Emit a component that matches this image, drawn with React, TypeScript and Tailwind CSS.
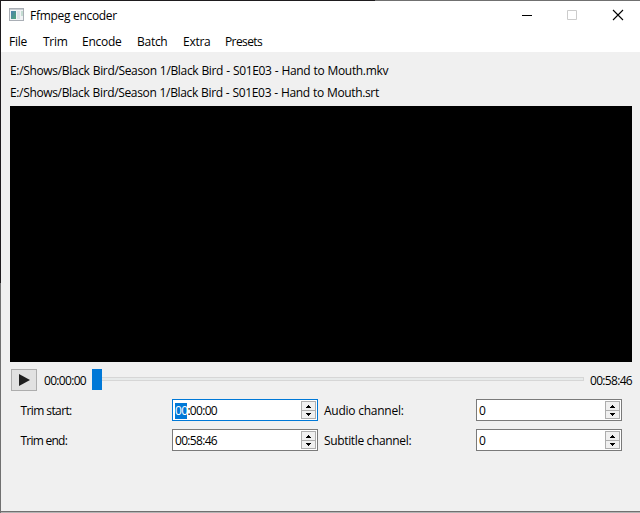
import React from 'react';

type SpinProps = { children: React.ReactNode; focused?: boolean };

function Arrow({ down = false }: { down?: boolean }) {
  return (
    <svg width="5" height="3" viewBox="0 0 5 3" shapeRendering="crispEdges" className={down ? 'rotate-180' : ''}>
      <path d="M2 0h1v1H2zM1 1h3v1H1zM0 2h5v1H0z" fill="#000" />
    </svg>
  );
}

function SpinBox({ children, focused }: SpinProps) {
  return (
    <div className={`flex h-[22px] w-[146px] border bg-white p-px pl-[2px] ${focused ? 'border-[#0078d7]' : 'border-[#7a7a7a]'}`}>
      <div className="flex-1 pt-[2px] leading-4">{children}</div>
      <div className="flex h-[18px] w-[15px] flex-col border border-[#adadad] bg-[#f0f0f0]">
        <div className="flex h-2 items-center justify-center"><Arrow /></div>
        <div className="flex h-2 items-center justify-center border-t border-[#adadad]"><Arrow down /></div>
      </div>
    </div>
  );
}

function Time({ children }: { children: React.ReactNode }) {
  return <span className="tracking-[-0.68px]">{children}</span>;
}

export default function App() {
  return (
    <div className="flex h-[513px] w-[640px] flex-col overflow-hidden bg-[#f0f0f0] font-['Open_Sans','Noto_Sans',sans-serif] text-[12px] leading-4 whitespace-nowrap text-black">
      <div className="flex h-px shrink-0">
        <div className="w-[375px] bg-[#1e1b1e]" />
        <div className="flex-1 bg-[#707070]" />
      </div>
      <div className="flex min-h-0 flex-1">
        <div className="flex w-px shrink-0 flex-col">
          <div className="h-[282px] bg-[#1e1b1e]" />
          <div className="flex-1 bg-[#707070]" />
        </div>
        <div className="flex flex-1 flex-col">
          <header className="flex h-[29px] shrink-0 bg-white">
            <svg width="15" height="14" viewBox="0 0 15 14" className="mt-[7px] ml-2" shapeRendering="crispEdges">
              <defs>
                <linearGradient id="pane" x1="0" y1="0" x2="1" y2="1">
                  <stop offset="0" stopColor="#4a7fb0" />
                  <stop offset="1" stopColor="#4fa678" />
                </linearGradient>
              </defs>
              <path d="M0 0h15v13H0z" fill="#a9aeb5" />
              <path d="M1 1h13v1H1z" fill="#c9cdd2" />
              <path d="M1 2h13v10H1z" fill="#f1f3f5" />
              <path d="M2 3h5v8H2z" fill="url(#pane)" />
              <path d="M8 3h3v8H8z" fill="#dde3e7" />
              <path d="M12 3h2v5h-2z" fill="#c4dcd2" />
            </svg>
            <span className="mt-[7px] ml-[6px] flex-1 tracking-[-0.3px]">Ffmpeg encoder</span>
            <svg width="118" height="29" viewBox="522 1 118 29" fill="none" className="shrink-0">
              <path d="M522 15.5h10" stroke="#000" />
              <path d="M567.5 10.5h9v9h-9z" stroke="#ccc" />
              <path d="M613 10l10 10M623 10l-10 10" stroke="#000" strokeWidth="1.1" />
            </svg>
          </header>
          <nav className="flex h-[22px] shrink-0 bg-white pt-[4px] pl-2 tracking-[-0.27px]">
            <span className="w-[34px]">File</span>
            <span className="w-[39px]">Trim</span>
            <span className="w-[55px]">Encode</span>
            <span className="w-[46px]">Batch</span>
            <span className="w-[42px]">Extra</span>
            <span className="tracking-[-0.6px]">Presets</span>
          </nav>
          <main className="flex flex-1 flex-col pt-[11px] pr-2 pl-[9px]">
            <div className="h-[22px] tracking-[-0.34px] [word-spacing:0.4px]">E:/Shows/Black Bird/Season 1/Black Bird - S01E03 - Hand to Mouth.mkv</div>
            <div className="h-[21px] tracking-[-0.35px] [word-spacing:0.4px]">E:/Shows/Black Bird/Season 1/Black Bird - S01E03 - Hand to Mouth.srt</div>
            <div className="h-[256px] shrink-0 bg-black" />
            <div className="mt-[7px] flex h-[22px] items-center pl-px">
              <div className="flex h-[22px] w-[26px] items-center justify-center border border-[#adadad] bg-[#e1e1e1]">
                <svg width="11" height="13" viewBox="0 0 11 13"><path d="M0 0L11 6L0 12z" fill="#202020" /></svg>
              </div>
              <div className="ml-[7px] w-[48px] pt-px"><Time>00:00:00</Time></div>
              <div className="mb-px h-[21px] w-[10px] bg-[#0078d7]" />
              <div className="mb-[2px] h-1 w-[482px] border border-l-0 border-[#d6d6d6] bg-[#e7eaea]" />
              <div className="ml-[6px] w-[42px] pt-px"><Time>00:58:46</Time></div>
            </div>
            <div className="mt-2 grid grid-cols-[152px_152px_152px_146px] gap-y-2 pl-[10px]">
              <div className="pt-1 pl-[0.5px] tracking-[-0.6px]">Trim start:</div>
              <SpinBox focused><Time><span className="inline-block h-4 bg-[#0078d7] text-white">00</span>:00:00</Time></SpinBox>
              <div className="pt-1 tracking-[-0.25px]">Audio channel:</div>
              <SpinBox>0</SpinBox>
              <div className="pt-1 pl-[0.5px] tracking-[-0.75px]">Trim end:</div>
              <SpinBox><Time>00:58:46</Time></SpinBox>
              <div className="pt-1 tracking-[-0.35px]">Subtitle channel:</div>
              <SpinBox>0</SpinBox>
            </div>
          </main>
          <div className="h-px shrink-0 bg-[#707070]" />
          <div className="h-px shrink-0 bg-[#b4b4b4]" />
        </div>
      </div>
    </div>
  );
}
